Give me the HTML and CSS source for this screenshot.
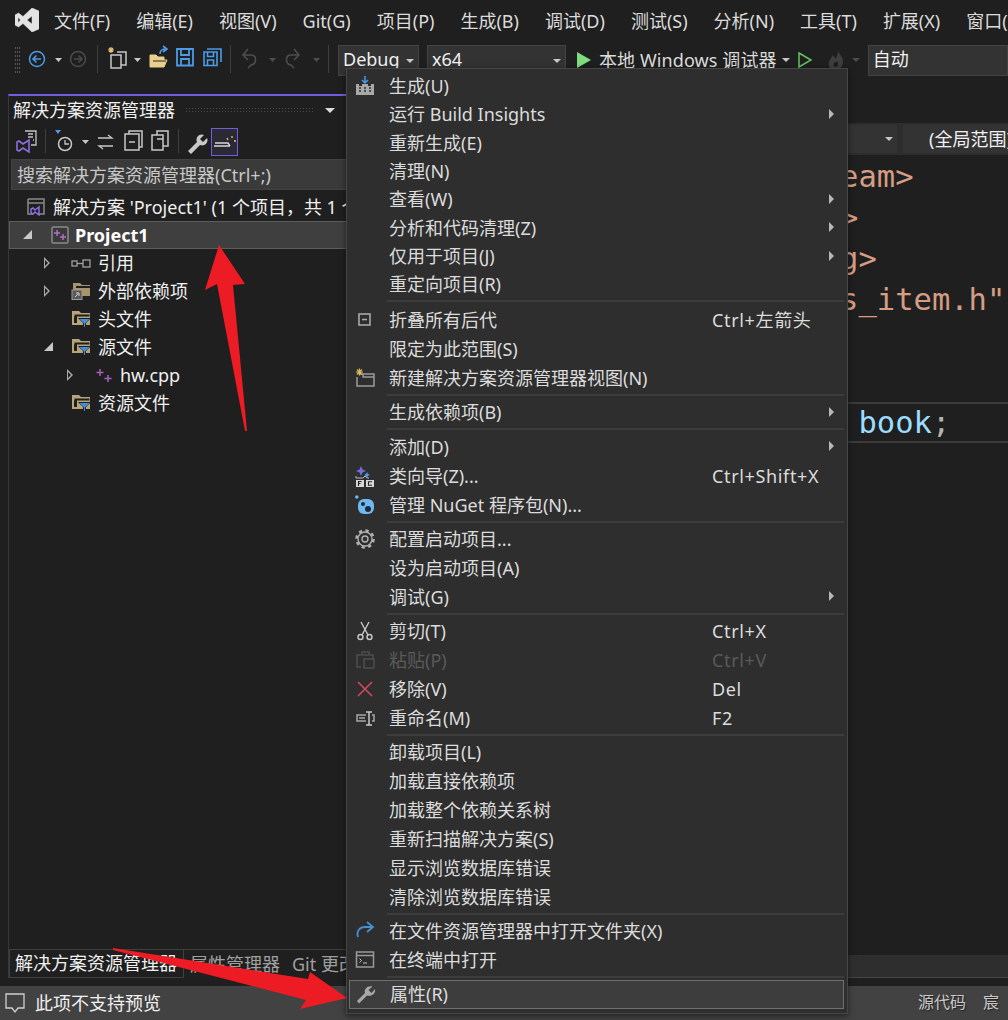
FILE: index.html
```html
<!DOCTYPE html>
<html>
<head>
  <title>Project1 - Visual Studio</title>
  <link rel="stylesheet" href="styles.css">
</head>
<body>
  <!-- Menu bar -->
  <header class="menubar">
    <svg class="logo" width="24" height="24" viewBox="0 0 24 24">
      <path d="M17 0 24 3V21L17 24 8 15.500 3.500 19 0 17V7L3.500 5 8 8.500ZM17 8 12 12 17 16ZM3 9.500V14.500L5.500 12Z" fill="#e4e4e4" fill-rule="evenodd" stroke="#e4e4e4" stroke-width="0.500" stroke-linejoin="round"/>
    </svg>
    <nav class="menu-items">
      <span>文件(F)</span><span>编辑(E)</span><span>视图(V)</span><span>Git(G)</span><span>项目(P)</span><span>生成(B)</span>
      <span>调试(D)</span><span>测试(S)</span><span>分析(N)</span><span>工具(T)</span><span>扩展(X)</span><span>窗口(W)</span>
    </nav>
  </header>

  <!-- Toolbar -->
  <div class="toolbar">
    <svg class="tb-icons" width="338" height="40" viewBox="0 0 338 40">
      <path d="M15 8h5M15 12h5M15 16h5M15 20h5M15 24h5M15 28h5M15 32h5" stroke="#555" stroke-width="2" stroke-dasharray="1 1" fill="none"/>
      <circle cx="37" cy="19" r="7.500" fill="none" stroke="#4a9be8" stroke-width="1.500"/>
      <path d="M41 19h-7.500M36.500 15.500 33 19l3.500 3.500" fill="none" stroke="#4a9be8" stroke-width="1.500"/>
      <path d="M55 18h7l-3.500 4z" fill="#c8c8c8"/>
      <circle cx="78" cy="19" r="7.500" fill="none" stroke="#4a4a4a" stroke-width="1.500"/>
      <path d="M74 19h7M78.500 15.500 82 19l-3.500 3.500" fill="none" stroke="#4a4a4a" stroke-width="1.500"/>
      <path d="M97.500 5v28" stroke="#3f3f3f"/>
      <path d="M108 10h6M111 7v6M109 8l4 4M113 8l-4 4" stroke="#e2c27a" stroke-width="1.200"/>
      <path d="M117 12h9v13h-5M111 15h10v13h-10z" fill="none" stroke="#c8c8c8" stroke-width="1.500"/>
      <path d="M134 18h7l-3.500 4z" fill="#c8c8c8"/>
      <path d="M150 27V15h6l2 2h6v3h3l-3 7z" fill="#e8cf8e" stroke="#e8cf8e"/>
      <path d="M153 21h13" stroke="#2a2a2a"/>
      <path d="M160 14c0-4 3-5 6-5M163 6l4 3-4 3" fill="none" stroke="#4a9be8" stroke-width="1.600"/>
      <path d="M177 9h16v16.500h-16zM181 9v6h8V9M181 25.500v-6.500h8v6.500" fill="none" stroke="#4a9be8" stroke-width="1.800"/>
      <path d="M204 12h13v13.500h-13zM207.500 12v4.500h6V12M207.500 25.500V20h6v5.500M207 9h14v13" fill="none" stroke="#4a9be8" stroke-width="1.600"/>
      <path d="M230.500 5v28" stroke="#3f3f3f"/>
      <path d="M244 15h7c6 0 6 9 0 10l-3 3M248 9l-5 6 5 5" fill="none" stroke="#4d4d4d" stroke-width="1.600"/>
      <path d="M269 18h7l-3.500 4z" fill="#4d4d4d"/>
      <path d="M298 15h-7c-6 0-6 9 0 10l3 3M294 9l5 6-5 5" fill="none" stroke="#4d4d4d" stroke-width="1.600"/>
      <path d="M313 18h7l-3.500 4z" fill="#4d4d4d"/>
      <path d="M328.500 5v28" stroke="#3f3f3f"/>
    </svg>
    <div class="combo combo-config">Debug<i class="caret"></i></div>
    <div class="combo combo-platform">x64<i class="caret"></i></div>
    <svg class="play" width="14" height="16" viewBox="0 0 14 16"><path d="M0 0 14 8 0 16z" fill="#7fdc7f"/></svg>
    <span class="run-label">本地 Windows 调试器</span>
    <i class="caret caret-run"></i>
    <svg class="play-outline" width="14" height="16" viewBox="0 0 14 16"><path d="M1 1 13 8 1 15z" fill="none" stroke="#63c463" stroke-width="1.500"/></svg>
    <svg class="flame" width="18" height="20" viewBox="0 0 18 20"><path d="M11 0C12 5 17 7 16 13 15 18 11 20 8 20 3 20 1 16 2 12 3 9 5 8 5 5 7 6 8 8 8 9 10 7 11 4 11 0ZM8 12C6 14 6 17 9 17 11 17 12 14 10 11 10 12 9 12 8 12Z" fill="#3e3e3e" fill-rule="evenodd"/></svg>
    <i class="caret caret-dim"></i>
    <div class="combo combo-scope">自动</div>
  </div>

  <main class="workspace">
    <!-- Solution explorer -->
    <aside class="panel">
      <div class="panel-title">
        <span>解决方案资源管理器</span>
        <i class="grip"></i>
        <i class="caret caret-title"></i>
      </div>
      <div class="panel-tools">
        <svg width="202" height="32" viewBox="9 0 202 32">
          <path d="M17 19l6-4v12l-6-4-4 3-2-1v-8l2-1z" transform="translate(6 -1)" fill="none" stroke="#8a6fe0" stroke-width="1.600"/>
          <path d="M25 5h11v14h-5M28 8h5M28 11h5M33 14h1" fill="none" stroke="#c4c4c4" stroke-width="1.300"/>
          <path d="M45.500 3v24" stroke="#3f3f3f"/>
          <path d="M55 4h6l-3 4z" fill="#4a9be8"/>
          <circle cx="65" cy="18" r="6.500" fill="none" stroke="#c8c8c8" stroke-width="1.500"/>
          <path d="M65 14v4h4" fill="none" stroke="#c8c8c8" stroke-width="1.300"/>
          <path d="M82 14h7l-3.500 4z" fill="#c8c8c8"/>
          <path d="M98 12h14l-4-3M113 20H99l4 3" fill="none" stroke="#c8c8c8" stroke-width="1.300"/>
          <path d="M125 8h14v16h-14zM129 8V5h13v16h-3M129 16h6" fill="none" stroke="#c8c8c8" stroke-width="1.500"/>
          <path d="M152 9h11v15h-11zM157 9V5h11v15h-5M157 13h6" fill="none" stroke="#c8c8c8" stroke-width="1.500"/>
          <path d="M178.500 3v24" stroke="#3f3f3f"/>
          <path d="M188 25l9-9c-2-5 3-9 7-7l-4 4 3 3 4-4c2 4-2 9-7 7l-9 9z" fill="#c8c8c8"/>
        </svg>
        <div class="tool-active">
          <svg width="24" height="14" viewBox="0 0 24 14"><path d="M1 11h16M2 8h13l2 3" fill="none" stroke="#d8d8d8" stroke-width="1.400"/><path d="M14 3l1 2M19 1v2M21 6h2" stroke="#e2c27a" stroke-width="1.300"/></svg>
        </div>
      </div>
      <div class="panel-search">搜索解决方案资源管理器(Ctrl+;)</div>
      <ul class="tree">
        <li class="tree-row lv-sol">
          <svg class="tree-icon" width="18" height="18" viewBox="0 0 18 18"><path d="M1 1h16v15h-6M1 1v15h5M1 5h16" fill="none" stroke="#8a8a8a" stroke-width="1.500"/><path d="M8 12l4-3v8l-4-3-2 2-2-1v-4l2-1z" fill="none" stroke="#8a6fe0" stroke-width="1.500"/></svg>
          <span class="clip">解决方案 'Project1' (1 个项目，共 1 个)</span>
        </li>
        <li class="tree-row lv-0 selected">
          <i class="twist twist-open"></i>
          <svg class="tree-icon" width="18" height="18" viewBox="0 0 18 18"><rect x="1" y="1" width="16" height="16" rx="1.500" fill="#3a3a3a" stroke="#8a8a8a" stroke-width="1.500"/><path d="M6 4v6M3 7h6M12 8v6M9 11h6" stroke="#b36fc8" stroke-width="1.400"/></svg>
          <b>Project1</b>
        </li>
        <li class="tree-row lv-1">
          <i class="twist twist-closed"></i>
          <svg class="tree-icon" width="20" height="18" viewBox="0 0 20 18"><rect x="1" y="7" width="5" height="5" fill="none" stroke="#a0a0a0" stroke-width="1.300"/><rect x="12" y="6" width="7" height="7" fill="none" stroke="#a0a0a0" stroke-width="1.300"/><path d="M6 9.500h6" stroke="#a0a0a0" stroke-width="1.300"/></svg>
          <span>引用</span>
        </li>
        <li class="tree-row lv-1">
          <i class="twist twist-closed"></i>
          <svg class="tree-icon" width="20" height="18" viewBox="0 0 20 18"><path d="M2 1h7l2 2h8v11H2z" fill="#a8946a"/><path d="M5 4h14v2H5z" fill="#1f1f1f"/><rect x="1" y="8" width="10" height="9.500" fill="#5a5a5a" stroke="#9a9a9a"/><path d="M4 15l4-4M5 11h3v3" fill="none" stroke="#d0d0d0"/></svg>
          <span>外部依赖项</span>
        </li>
        <li class="tree-row lv-1">
          <i class="twist"></i>
          <svg class="tree-icon" width="20" height="18" viewBox="0 0 20 18"><use href="#filter-folder"/></svg>
          <span>头文件</span>
        </li>
        <li class="tree-row lv-1">
          <i class="twist twist-open"></i>
          <svg class="tree-icon" width="20" height="18" viewBox="0 0 20 18"><use href="#filter-folder"/></svg>
          <span>源文件</span>
        </li>
        <li class="tree-row lv-2">
          <i class="twist twist-closed"></i>
          <svg class="tree-icon" width="18" height="18" viewBox="0 0 18 18"><path d="M5 3v7M1.500 6.500h7M13 9v7M9.500 12.500h7" stroke="#a85fc0" stroke-width="1.500"/></svg>
          <span>hw.cpp</span>
        </li>
        <li class="tree-row lv-1">
          <i class="twist"></i>
          <svg class="tree-icon" width="20" height="18" viewBox="0 0 20 18"><use href="#filter-folder"/></svg>
          <span>资源文件</span>
        </li>
      </ul>
      <div class="panel-tabs">
        <span class="tab active">解决方案资源管理器</span>
        <span class="tab">属性管理器</span>
        <span class="tab">Git 更改</span>
      </div>
    </aside>

    <!-- Editor -->
    <section class="editor">
      <div class="navbar">
        <div class="nav-combo nav-left"><i class="caret"></i></div>
        <div class="nav-combo nav-right">(全局范围)</div>
      </div>
      <div class="code">
        <div class="line str">#include&lt;iostream&gt;</div>
        <div class="line str">#include&lt;stack&gt;</div>
        <div class="line str">#include&lt;string&gt;</div>
        <div class="line str">#include "Sales_item.h"</div>
        <div class="line"></div>
        <div class="line"></div>
        <div class="line current"><span class="var">    Sales_item book</span><span class="punct">;</span></div>
      </div>
      <div class="editor-bottom"></div>
    </section>
  </main>

  <footer class="statusbar">
    <svg class="status-icon" width="22" height="22" viewBox="0 0 22 22"><path d="M2 2h18v14h-6l-3 4-3-4H2z" fill="none" stroke="#d0d0d0" stroke-width="1.300"/></svg>
    <span class="status-text">此项不支持预览</span>
    <span class="status-right">源代码</span>
    <span class="status-right">宸</span>
  </footer>

  <!-- Context menu -->
  <div class="context-menu">
    <div class="item tight"><span class="ic"><svg width="20" height="20" viewBox="0 0 20 20"><path d="M10 0v6M7 4l3 3 3-3" fill="none" stroke="#4a9be8" stroke-width="1.500"/><path d="M1 8h3v2h3V8h6v2h3V8h3v11H1z" fill="#a8a8a8"/><path d="M4 12h2M9 12h2M14 12h2M4 15h2M9 15h2M14 15h2" stroke="#2e2e2e" stroke-width="1.500"/></svg></span><span class="label">生成(U)</span></div>
    <div class="item tight sub"><span class="ic"></span><span class="label">运行 Build Insights</span></div>
    <div class="item tight"><span class="ic"></span><span class="label">重新生成(E)</span></div>
    <div class="item tight"><span class="ic"></span><span class="label">清理(N)</span></div>
    <div class="item tight sub"><span class="ic"></span><span class="label">查看(W)</span></div>
    <div class="item tight sub"><span class="ic"></span><span class="label">分析和代码清理(Z)</span></div>
    <div class="item tight sub"><span class="ic"></span><span class="label">仅用于项目(J)</span></div>
    <div class="item tight"><span class="ic"></span><span class="label">重定向项目(R)</span></div>
    <hr class="wide">
    <div class="item"><span class="ic"><svg width="20" height="20" viewBox="0 0 20 20"><rect x="4" y="4" width="11" height="11" fill="none" stroke="#a8a8a8" stroke-width="1.600"/><path d="M7 9.500h5" stroke="#a8a8a8" stroke-width="1.600"/></svg></span><span class="label">折叠所有后代</span><span class="key">Ctrl+左箭头</span></div>
    <div class="item"><span class="ic"></span><span class="label">限定为此范围(S)</span></div>
    <div class="item"><span class="ic"><svg width="20" height="20" viewBox="0 0 20 20"><path d="M5 6h14v12H2V9M8 6v3h11" fill="none" stroke="#9a9a9a" stroke-width="1.500"/><path d="M4.500 0.500v7M1 4h7M2 1.500l5 5M7 1.500l-5 5" stroke="#d8b95f" stroke-width="1.200"/></svg></span><span class="label">新建解决方案资源管理器视图(N)</span></div>
    <hr>
    <div class="item sub"><span class="ic"></span><span class="label">生成依赖项(B)</span></div>
    <hr>
    <div class="item sub"><span class="ic"></span><span class="label">添加(D)</span></div>
    <div class="item"><span class="ic"><svg width="20" height="22" viewBox="0 0 20 22"><path d="M6 1l1.500 3.500L11 6 7.500 7.500 6 11 4.500 7.500 1 6l3.500-1.500z" fill="#6f6fe0"/><path d="M1 11v2h7l2-2 2 2h2" fill="none" stroke="#b8b8b8"/><path d="M12 7l1 2 2 1-2 1-1 2-1-2-2-1 2-1z" fill="#4a9be8"/><rect x="1" y="15" width="8" height="7" fill="#d8d8d8"/><rect x="11" y="15" width="8" height="7" fill="#d8d8d8"/><path d="M3.500 21v-4.500h3M3.500 18.500h2M17 16.800h-3.500v3.500H17" fill="none" stroke="#222" stroke-width="1.100"/></svg></span><span class="label">类向导(Z)...</span><span class="key">Ctrl+Shift+X</span></div>
    <div class="item"><span class="ic"><svg width="20" height="20" viewBox="0 0 20 20"><rect x="3" y="4" width="16" height="15" rx="6" fill="#6fb8f0"/><circle cx="1.800" cy="2" r="1.800" fill="#6fb8f0"/><circle cx="8" cy="9" r="2" fill="#1c2a3a"/><circle cx="13" cy="14" r="3" fill="#1c2a3a"/></svg></span><span class="label">管理 NuGet 程序包(N)...</span></div>
    <hr>
    <div class="item"><span class="ic"><svg width="20" height="20" viewBox="0 0 20 20"><circle cx="10" cy="10" r="3" fill="none" stroke="#b0b0b0" stroke-width="1.400"/><circle cx="10" cy="10" r="7" fill="none" stroke="#b0b0b0" stroke-width="1.400"/><circle cx="10" cy="10" r="8.500" fill="none" stroke="#b0b0b0" stroke-width="2.500" stroke-dasharray="3.300 3.400"/></svg></span><span class="label">配置启动项目...</span></div>
    <div class="item"><span class="ic"></span><span class="label">设为启动项目(A)</span></div>
    <div class="item sub"><span class="ic"></span><span class="label">调试(G)</span></div>
    <hr>
    <div class="item"><span class="ic"><svg width="20" height="20" viewBox="0 0 20 20"><path d="M6 1l7 13M14 1l-7 13" stroke="#c8c8c8" stroke-width="1.400"/><circle cx="5.500" cy="16" r="2.500" fill="none" stroke="#c8c8c8" stroke-width="1.400"/><circle cx="14.500" cy="16" r="2.500" fill="none" stroke="#c8c8c8" stroke-width="1.400"/></svg></span><span class="label">剪切(T)</span><span class="key">Ctrl+X</span></div>
    <div class="item disabled"><span class="ic"><svg width="20" height="20" viewBox="0 0 20 20"><path d="M6 17H2V5h4M15 5h3v4M7 5V2h7v3zM9 9h10v9H9z" fill="none" stroke="#4d4d4d" stroke-width="1.500"/></svg></span><span class="label">粘贴(P)</span><span class="key">Ctrl+V</span></div>
    <div class="item"><span class="ic"><svg width="20" height="20" viewBox="0 0 20 20"><path d="M3 3l14 14M17 3L3 17" stroke="#d8485c" stroke-width="1.500"/></svg></span><span class="label">移除(V)</span><span class="key">Del</span></div>
    <div class="item"><span class="ic"><svg width="20" height="20" viewBox="0 0 20 20"><path d="M11 7H2v6h9" fill="none" stroke="#a8a8a8" stroke-width="1.500"/><path d="M4 10h6" stroke="#a8a8a8" stroke-width="1.500"/><path d="M11 4h6M14 4v13M11 17h6" fill="none" stroke="#c8c8c8" stroke-width="1.500"/><path d="M17 7h2v6h-2" fill="none" stroke="#a8a8a8" stroke-width="1.500"/></svg></span><span class="label">重命名(M)</span><span class="key">F2</span></div>
    <hr>
    <div class="item"><span class="ic"></span><span class="label">卸载项目(L)</span></div>
    <div class="item"><span class="ic"></span><span class="label">加载直接依赖项</span></div>
    <div class="item"><span class="ic"></span><span class="label">加载整个依赖关系树</span></div>
    <div class="item"><span class="ic"></span><span class="label">重新扫描解决方案(S)</span></div>
    <div class="item"><span class="ic"></span><span class="label">显示浏览数据库错误</span></div>
    <div class="item"><span class="ic"></span><span class="label">清除浏览数据库错误</span></div>
    <hr>
    <div class="item"><span class="ic"><svg width="20" height="20" viewBox="0 0 20 20"><path d="M3 16c-2-6 2-10 7-10h7M12 1l6 5-6 5" fill="none" stroke="#4a8fd0" stroke-width="1.800"/></svg></span><span class="label">在文件资源管理器中打开文件夹(X)</span></div>
    <div class="item"><span class="ic"><svg width="20" height="20" viewBox="0 0 20 20"><rect x="1.500" y="2" width="17" height="15" fill="none" stroke="#9a9a9a" stroke-width="1.500"/><path d="M2 5.500h16" stroke="#9a9a9a" stroke-width="1.500"/><path d="M4.500 8.500l2 2-2 2M8 13h4" fill="none" stroke="#c8c8c8"/></svg></span><span class="label">在终端中打开</span></div>
    <hr>
    <div class="item hover"><span class="ic"><svg width="20" height="20" viewBox="0 0 20 20"><path d="M1 17l8-8c-1.500-4 3-8 7.500-6.500l-4 3.500 3 3 3.500-4C20 9 16 13 11 11.500l-8 8z" fill="#a8a8a8"/></svg></span><span class="label">属性(R)</span></div>
  </div>

  <!-- Annotation arrows drawn on top of the screenshot -->
  <svg class="arrows" width="1008" height="1020" viewBox="0 0 1008 1020">
    <path d="M219 245 245 284 233 285 247 431 245 431 217 284 205 290Z" fill="#ed1c24"/>
    <path d="M113 948 308 979 310 972 347 998 300 1009 306 1000 113 950Z" fill="#ed1c24"/>
  </svg>

  <svg class="defs" width="0" height="0">
    <symbol id="filter-folder" viewBox="0 0 20 18">
      <path d="M1 1h7l2 2h9v12H1z" fill="#b7a479"/>
      <path d="M3.500 4.500h15v2h-15zM3 6.500h3V13H3z" fill="#1f1f1f"/>
      <path d="M7 8h13l-5 5v5h-3v-5z" fill="#1f1f1f"/>
      <path d="M8.500 9h10l-4.500 4.500V17h-1v-3.500z" fill="#3f8fdc"/>
    </symbol>
  </svg>
</body>
</html>
```
FILE: styles.css
```css
/* Dark IDE window with a project context menu open */
* {
  box-sizing: border-box;
}

html, body {
  height: 100%;
}

body {
  margin: 0;
  display: flex;
  flex-direction: column;
  overflow: hidden;
  background-color: #1f1f1f;
  color: #dcdcdc;
  font-family: "Noto Sans", "Noto Sans CJK SC", sans-serif;
  font-size: 18px;
  line-height: 24px;
}

/* Menu bar */
.menubar {
  display: flex;
  align-items: center;
  height: 40px;
  padding: 2px 0 0 15px;
  flex: none;
}

.logo {
  flex: none;
  margin: -3px 15px 0 0;
}

.menu-items {
  display: flex;
  gap: 26px;
  white-space: nowrap;
}

/* Toolbar */
.toolbar {
  display: flex;
  align-items: center;
  height: 40px;
  flex: none;
  white-space: nowrap;
}

.tb-icons {
  flex: none;
}

.combo {
  position: relative;
  flex: none;
  height: 31px;
  line-height: 27px;
  background-color: #333333;
  border: 1px solid #434343;
  color: #f0f0f0;
}

.combo-config {
  width: 81px;
  padding-left: 4px;
  margin-right: 8px;
}

.combo-platform {
  width: 139px;
  padding-left: 4px;
}

.combo-scope {
  width: 140px;
  padding-left: 4px;
  margin-left: 8px;
}

.caret {
  display: inline-block;
  width: 0;
  height: 0;
  border-left: 4px solid transparent;
  border-right: 4px solid transparent;
  border-top: 4px solid #c8c8c8;
}

.combo .caret {
  position: absolute;
  right: 4px;
  top: 13px;
}

.play {
  flex: none;
  margin-left: 11px;
  margin-right: 8px;
}

.run-label {
  color: #dcdcdc;
  letter-spacing: 0.1px;
}

.caret-run {
  margin-left: 5px;
}

.play-outline {
  margin-left: 8px;
}

.flame {
  margin-left: 15px;
}

.caret-dim {
  margin-left: 7px;
  border-top-color: #4d4d4d;
}

/* Panels */
.workspace {
  flex: 1;
  display: flex;
  min-height: 0;
}

.panel {
  width: 342px;
  flex: none;
  display: flex;
  flex-direction: column;
  margin: 14px 0 8px 8px;
  border-left: 1px solid #383838;
  border-top: 2px solid #6f5fe0;
}

.panel-title {
  display: flex;
  align-items: center;
  height: 30px;
  padding: 0 0 2px 4px;
  flex: none;
  color: #f0f0f0;
}

.grip {
  width: 128px;
  height: 6px;
  margin-left: 10px;
  background-image: radial-gradient(#4a4a4a 40%, transparent 45%);
  background-size: 3px 3px;
}

.caret-title {
  margin-left: 12px;
  border-left-width: 5px;
  border-right-width: 5px;
  border-top-width: 5px;
  border-top-color: #dcdcdc;
}

.panel-tools {
  display: flex;
  align-items: center;
  height: 32px;
  margin-bottom: 1px;
  flex: none;
}

.panel-tools svg {
  flex: none;
}

.tool-active {
  display: flex;
  align-items: center;
  justify-content: center;
  width: 27px;
  height: 28px;
  background-color: #2b2a33;
  border: 1px solid #6f5fe0;
}

.panel-search {
  height: 31px;
  line-height: 30px;
  margin-left: 2px;
  padding-left: 5px;
  flex: none;
  background-color: #3a3a3a;
  border: 1px solid #424242;
  color: #c8c8c8;
}

/* Tree */
.tree {
  flex: 1;
  list-style: none;
  margin: 2.5px 0 0;
  padding: 0;
  color: #f0f0f0;
}

.tree-row {
  display: flex;
  align-items: center;
  height: 28px;
  white-space: nowrap;
}

.tree-icon {
  flex: none;
}

.twist {
  flex: none;
  width: 10px;
  height: 10px;
}

.twist-closed {
  width: 0;
  height: 0;
  border-left: 6px solid #a8a8a8;
  border-top: 6px solid transparent;
  border-bottom: 6px solid transparent;
  position: relative;
}

.twist-closed::after {
  content: "";
  position: absolute;
  left: -5px;
  top: -3px;
  border-left: 3px solid #1f1f1f;
  border-top: 3px solid transparent;
  border-bottom: 3px solid transparent;
}

.twist-open {
  width: 0;
  height: 0;
  border-left: 9px solid transparent;
  border-bottom: 9px solid #c8c8c8;
}

.lv-sol {
  padding-left: 18px;
  gap: 8px;
}

.lv-0 {
  padding-left: 13px;
  gap: 6px;
}

.lv-0 .twist {
  margin-right: 13px;
}

.lv-1 {
  padding-left: 35px;
  gap: 7px;
}

.lv-1 .twist {
  margin-right: 10px;
}

.lv-1 .twist-closed {
  margin-right: 14px;
}

.lv-1 .twist-open {
  margin-right: 11px;
}

.lv-2 {
  padding-left: 58px;
  gap: 7px;
}

.lv-2 .twist-closed {
  margin-right: 15px;
}

.selected {
  background-color: #3f3f3f;
  border: 1px solid #5c5c5c;
}

.selected b {
  color: #ffffff;
}

/* Tabs at the bottom of the panel */
.panel-tabs {
  display: flex;
  height: 29px;
  flex: none;
  white-space: nowrap;
  overflow: hidden;
  border-top: 1px solid #3f3f3f;
}

.tab {
  padding: 0 6px;
  line-height: 29px;
  color: #a0a0a0;
}

.tab.active {
  margin-top: -1px;
  padding: 0 6px 0 5px;
  background-color: #1f1f1f;
  border: 1px solid #3f3f3f;
  border-top: none;
  color: #f0f0f0;
}

/* Editor */
.editor {
  flex: 1;
  min-width: 0;
  display: flex;
  flex-direction: column;
  margin-bottom: 8px;
}

.navbar {
  display: flex;
  height: 32px;
  margin-top: 43px;
  padding: 2px 0 2px;
  gap: 6px;
  background-color: #2d2d2d;
  flex: none;
}

.nav-combo {
  position: relative;
  background-color: #333333;
}

.nav-left {
  width: 547px;
}

.nav-left .caret {
  position: absolute;
  right: 4px;
  top: 12px;
}

.nav-right {
  flex: 1;
  padding-left: 26px;
  white-space: nowrap;
  overflow: hidden;
  color: #f0f0f0;
  line-height: 28px;
}

.code {
  flex: 1;
  padding: 1px 0 0 233px;
  font-family: "DejaVu Sans Mono", monospace;
  font-size: 30.5px;
  line-height: 41px;
  overflow: hidden;
}

.line {
  height: 41px;
  white-space: pre;
}

.str {
  color: #d69d85;
}

.var {
  color: #9cdcfe;
}

.punct {
  color: #b4b4b4;
}

.current {
  margin-left: -233px;
  padding-left: 233px;
  border-top: 2px solid #3a3a3a;
  border-bottom: 2px solid #3a3a3a;
  line-height: 37px;
}

.editor-bottom {
  height: 23px;
  flex: none;
  background-color: #2e2e2e;
  border-bottom: 1px solid #454545;
}

/* Status bar */
.statusbar {
  display: flex;
  align-items: center;
  height: 34px;
  flex: none;
  padding-left: 4px;
  background-color: #424242;
  white-space: nowrap;
}

.status-text {
  margin-left: 9px;
  margin-right: auto;
  color: #f0f0f0;
}

.status-right {
  margin: 0 17px 3px 0;
  font-size: 16px;
  color: #c8c8c8;
  text-shadow: 1px 1px 1px #222222;
}

.status-right:last-child {
  margin-right: 9px;
}

/* Context menu */
.context-menu {
  position: absolute;
  left: 346px;
  top: 68px;
  width: 502px;
  height: 946px;
  padding: 3px 3px 0 2px;
  background-color: #2e2e2e;
  border: 1px solid #454545;
  box-shadow: 0 2px 6px rgba(0, 0, 0, 0.5);
}

.item {
  position: relative;
  display: flex;
  align-items: center;
  height: 29px;
  white-space: nowrap;
}

.item.tight {
  height: 28.3px;
}

.item .ic {
  display: flex;
  align-items: center;
  justify-content: center;
  width: 32px;
  margin-right: 8px;
  flex: none;
}

.item .key {
  position: absolute;
  left: 363px;
  letter-spacing: 0.65px;
}

.item.sub::after {
  content: "";
  position: absolute;
  right: 10px;
  top: 9px;
  border-left: 5px solid #b8b8b8;
  border-top: 5px solid transparent;
  border-bottom: 5px solid transparent;
}

.item.disabled {
  color: #5a5a5a;
}

.item.hover {
  margin-top: 1px;
  background-color: #3d3d3d;
  border: 1px solid #6e6e6e;
}

.context-menu hr {
  height: 2px;
  margin: 1.6px 0 1.6px 38px;
  border: none;
  background-color: #3d3d3d;
}

.context-menu hr.wide {
  margin: 2px 0 3.3px 38px;
}

/* Annotation layer */
.arrows {
  position: absolute;
  left: 0;
  top: 0;
  pointer-events: none;
}

.defs {
  position: absolute;
}
```
